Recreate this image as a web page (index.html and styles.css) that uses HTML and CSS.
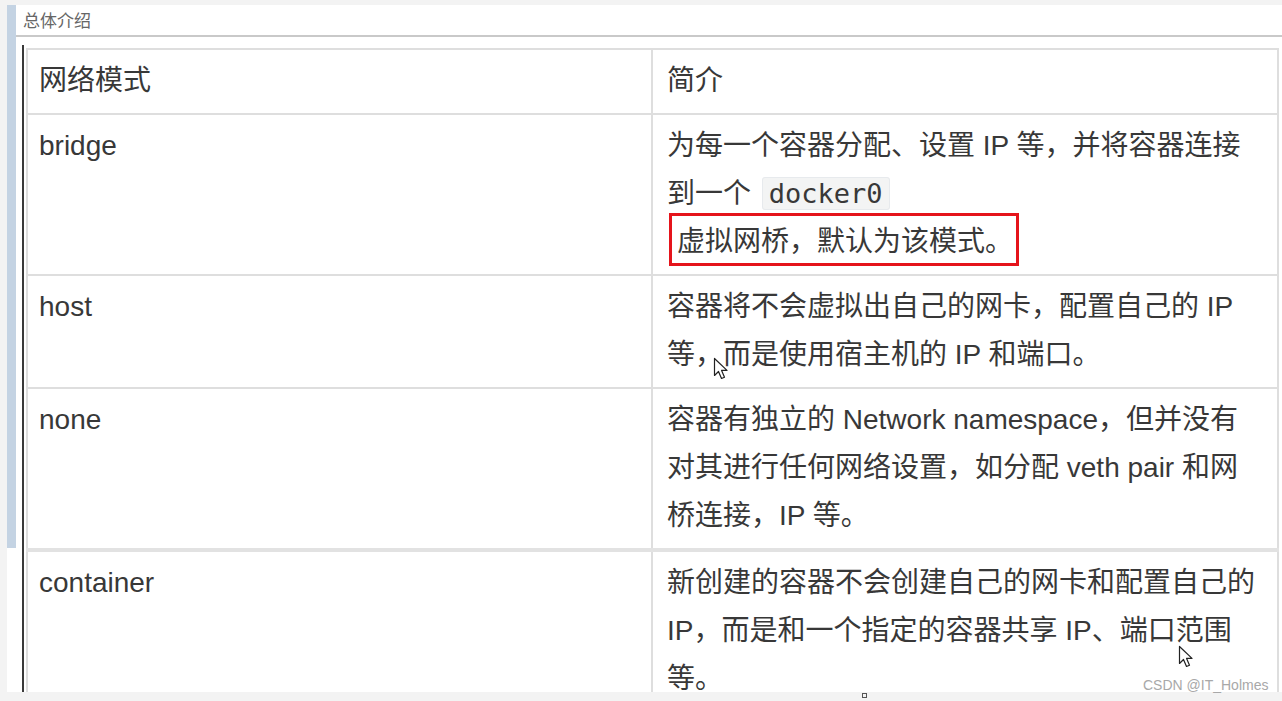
FILE: index.html
```html
<!DOCTYPE html>
<html>
<head>
    <title>总体介绍</title>
    <link rel="stylesheet" href="styles.css">
</head>
<body>
    <div class="screen">
        <div class="sheet">
            <div class="accent"></div>
            <div class="doc">
                <div class="doc-title">总体介绍</div>
                <div class="doc-body">
                    <table class="modes">
                        <colgroup>
                            <col class="col-name">
                            <col class="col-desc">
                        </colgroup>
                        <tr>
                            <td>网络模式</td>
                            <td>简介</td>
                        </tr>
                        <tr>
                            <td>bridge</td>
                            <td>为每一个容器分配、设置 IP 等，并将容器连接<br>到一个 <code>docker0</code><br><span class="mark">虚拟网桥，默认为该模式。</span></td>
                        </tr>
                        <tr>
                            <td>host</td>
                            <td>容器将不会虚拟出自己的网卡，配置自己的 IP<br>等，而是使用宿主机的 IP 和端口。</td>
                        </tr>
                        <tr>
                            <td>none</td>
                            <td>容器有独立的 Network namespace，但并没有<br>对其进行任何网络设置，如分配 veth pair 和网<br>桥连接，IP 等。</td>
                        </tr>
                        <tr class="break-row">
                            <td>container</td>
                            <td>新创建的容器不会创建自己的网卡和配置自己的<br>IP，而是和一个指定的容器共享 IP、端口范围<br>等。</td>
                        </tr>
                    </table>
                </div>
            </div>
        </div>
        <div class="statusbar"><span class="status-mark"></span></div>

        <!-- mouse pointers captured in the recording -->
        <svg class="pointer pointer-one" width="16" height="24" viewBox="0 0 16 24">
            <path d="M1.5 1.5 L1.5 18.5 L5.5 14.5 L8.5 21.5 L11.5 20.2 L8.6 13.4 L14 13.4 Z" fill="#fff" stroke="#222" stroke-width="1.2" stroke-linejoin="round"/>
        </svg>
        <svg class="pointer pointer-two" width="16" height="24" viewBox="0 0 16 24">
            <path d="M1.5 1.5 L1.5 18.5 L5.5 14.5 L8.5 21.5 L11.5 20.2 L8.6 13.4 L14 13.4 Z" fill="#fff" stroke="#222" stroke-width="1.2" stroke-linejoin="round"/>
        </svg>

        <div class="watermark">CSDN @IT_Holmes</div>
    </div>
</body>
</html>
```

FILE: styles.css
```css
body {
    margin: 0;
    background: #f3f3f3;
}
.screen {
    position: relative;
    width: 1282px;
    height: 701px;
    overflow: hidden;
    background: #f3f3f3;
}
.sheet {
    display: flex;
    margin: 5px 0 0 7px;
    height: 687px;
    background: #fff;
}
.accent {
    flex: 0 0 9px;
    height: 543px;
    background: #c4d3e3;
}
.doc {
    flex: 1;
    display: flex;
    flex-direction: column;
    min-width: 0;
}
.doc-title {
    height: 30px;
    line-height: 30px;
    padding-left: 7px;
    border-bottom: 2px solid #c9c9c9;
    font-family: "Noto Sans CJK SC", sans-serif;
    font-size: 17px;
    color: #666;
}
.doc-body {
    flex: 1;
    margin: 8px 0 0 6px;
    padding-top: 3px;
    border-left: 2px solid #3a3a3a;
    overflow: hidden;
}
.modes {
    margin-left: 2px;
    width: 1251px;
    table-layout: fixed;
    border-collapse: collapse;
    font-family: "Liberation Sans", "Noto Sans CJK SC", sans-serif;
    font-size: 28px;
    line-height: 48px;
    color: #383838;
}
.col-name {
    width: 625px;
}
.col-desc {
    width: 626px;
}
.modes td {
    vertical-align: top;
    padding: 7px 13px 8px 14px;
    border: 2px solid #dedede;
}
.modes td:first-child {
    padding-left: 11px;
}
.break-row td {
    border-top: 4px solid #e2e2e2;
}
.modes code {
    font-family: "DejaVu Sans Mono", monospace;
    font-size: 27px;
    line-height: 1;
    padding: 0 6px;
    margin: 0 3px;
    background: #f3f4f4;
    border: 1px solid #e7eaed;
    border-radius: 3px;
}
.mark {
    margin-left: 2px;
    padding: 10px 3px 6px 5px;
    border: 3px solid #e5141b;
}
.statusbar {
    height: 9px;
    position: relative;
}
.status-mark {
    position: absolute;
    left: 862px;
    top: 1px;
    width: 3px;
    height: 3px;
    border: 1.5px solid #555;
}
.pointer {
    position: absolute;
}
.pointer-one {
    left: 713px;
    top: 357px;
}
.pointer-two {
    left: 1178px;
    top: 645px;
}
.watermark {
    position: absolute;
    left: 1143px;
    top: 677px;
    font-family: "Liberation Sans", sans-serif;
    font-size: 14px;
    color: #a8a8a8;
}
```
